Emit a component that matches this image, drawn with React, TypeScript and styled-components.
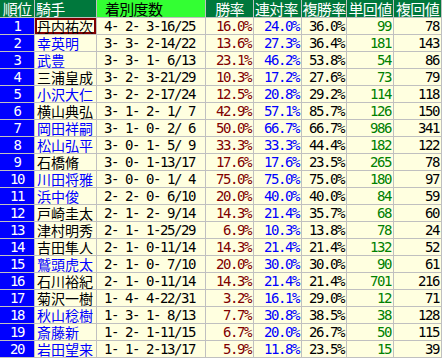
import React from 'react';
import styled, { createGlobalStyle } from 'styled-components';

const GlobalStyle = createGlobalStyle`
    html, body {
        margin: 0;
        padding: 0;
        background: #ffffff;
    }
`;

const MONO = `'DejaVu Sans Mono', 'Liberation Mono', 'Noto Sans CJK JP', monospace`;
const JP = `'Noto Sans CJK JP', 'Noto Sans', sans-serif`;

interface Row {
    name: string;
    blue: boolean;
    record: string;
    win: string;
    place2: string;
    place3: string;
    tan: string;
    fuku: string;
}

const rows: Row[] = [
    { name: '丹内祐次', blue: false, record: '4- 2- 3-16/25', win: '16.0%', place2: '24.0%', place3: '36.0%', tan: '99', fuku: '78' },
    { name: '幸英明', blue: true, record: '3- 3- 2-14/22', win: '13.6%', place2: '27.3%', place3: '36.4%', tan: '181', fuku: '143' },
    { name: '武豊', blue: true, record: '3- 3- 1- 6/13', win: '23.1%', place2: '46.2%', place3: '53.8%', tan: '54', fuku: '86' },
    { name: '三浦皇成', blue: false, record: '3- 2- 3-21/29', win: '10.3%', place2: '17.2%', place3: '27.6%', tan: '73', fuku: '79' },
    { name: '小沢大仁', blue: true, record: '3- 2- 2-17/24', win: '12.5%', place2: '20.8%', place3: '29.2%', tan: '114', fuku: '118' },
    { name: '横山典弘', blue: false, record: '3- 1- 2- 1/ 7', win: '42.9%', place2: '57.1%', place3: '85.7%', tan: '126', fuku: '150' },
    { name: '岡田祥嗣', blue: true, record: '3- 1- 0- 2/ 6', win: '50.0%', place2: '66.7%', place3: '66.7%', tan: '986', fuku: '341' },
    { name: '松山弘平', blue: true, record: '3- 0- 1- 5/ 9', win: '33.3%', place2: '33.3%', place3: '44.4%', tan: '182', fuku: '122' },
    { name: '石橋脩', blue: false, record: '3- 0- 1-13/17', win: '17.6%', place2: '17.6%', place3: '23.5%', tan: '265', fuku: '78' },
    { name: '川田将雅', blue: true, record: '3- 0- 0- 1/ 4', win: '75.0%', place2: '75.0%', place3: '75.0%', tan: '180', fuku: '97' },
    { name: '浜中俊', blue: true, record: '2- 2- 0- 6/10', win: '20.0%', place2: '40.0%', place3: '40.0%', tan: '84', fuku: '59' },
    { name: '戸崎圭太', blue: false, record: '2- 1- 2- 9/14', win: '14.3%', place2: '21.4%', place3: '35.7%', tan: '68', fuku: '60' },
    { name: '津村明秀', blue: false, record: '2- 1- 1-25/29', win: '6.9%', place2: '10.3%', place3: '13.8%', tan: '78', fuku: '24' },
    { name: '吉田隼人', blue: false, record: '2- 1- 0-11/14', win: '14.3%', place2: '21.4%', place3: '21.4%', tan: '132', fuku: '52' },
    { name: '鷲頭虎太', blue: true, record: '2- 1- 0- 7/10', win: '20.0%', place2: '30.0%', place3: '30.0%', tan: '90', fuku: '61' },
    { name: '石川裕紀', blue: false, record: '2- 1- 0-11/14', win: '14.3%', place2: '21.4%', place3: '21.4%', tan: '701', fuku: '216' },
    { name: '菊沢一樹', blue: false, record: '1- 4- 4-22/31', win: '3.2%', place2: '16.1%', place3: '29.0%', tan: '12', fuku: '71' },
    { name: '秋山稔樹', blue: true, record: '1- 3- 1- 8/13', win: '7.7%', place2: '30.8%', place3: '38.5%', tan: '38', fuku: '128' },
    { name: '斎藤新', blue: true, record: '1- 2- 1-11/15', win: '6.7%', place2: '20.0%', place3: '26.7%', tan: '50', fuku: '115' },
    { name: '岩田望来', blue: true, record: '1- 1- 2-13/17', win: '5.9%', place2: '11.8%', place3: '23.5%', tan: '15', fuku: '39' },
];

const Table = styled.div`
    display: grid;
    grid-template-columns: 34px 61px 108px 47px 47px 44px 46px 47px;
    grid-template-rows: 17px repeat(20, 16px);
    gap: 1px;
    padding: 0 1px 1px 0;
    width: 442px;
    box-sizing: border-box;
    background: #c0c0c0;
`;

const HeadCell = styled.div<{ $bright?: boolean; $align?: 'left' | 'center'; $pad?: number }>`
    display: flex;
    align-items: center;
    justify-content: ${(p) => (p.$align === 'left' ? 'flex-start' : 'center')};
    padding-left: ${(p) => p.$pad ?? 0}px;
    background: ${(p) => (p.$bright ? '#33ff33' : '#00783c')};
    color: ${(p) => (p.$bright ? '#000000' : '#ffffff')};
    font-family: ${JP};
    font-size: 15px;
    letter-spacing: -0.7px;
    line-height: 17px;
    white-space: nowrap;
`;

const RankCell = styled.div`
    display: flex;
    align-items: center;
    justify-content: center;
    background: #0000ff;
    color: #ffffff;
    font-family: ${MONO};
    font-size: 14px;
    letter-spacing: -1.4px;
    line-height: 16px;
`;

const NameCell = styled.div<{ $blue: boolean; $framed?: boolean }>`
    display: flex;
    align-items: center;
    padding-left: 2px;
    background: #ffffe0;
    color: ${(p) => (p.$blue ? '#0000ff' : '#000000')};
    font-family: ${JP};
    font-size: 14px;
    line-height: 16px;
    white-space: nowrap;
    box-shadow: ${(p) => (p.$framed ? 'inset 0 0 0 2px #800000' : 'none')};
`;

const NumCell = styled.div<{ $color?: string; $left?: boolean }>`
    display: flex;
    align-items: center;
    justify-content: ${(p) => (p.$left ? 'flex-start' : 'flex-end')};
    padding: ${(p) => (p.$left ? '0 0 0 7px' : '0 2px 0 0')};
    background: #ffffe0;
    color: ${(p) => p.$color ?? '#000000'};
    font-family: ${MONO};
    font-size: 14px;
    letter-spacing: -1.43px;
    line-height: 16px;
    white-space: pre;
`;

const App: React.FC = () => {
    return (
        <>
            <GlobalStyle />
            <Table>
                <HeadCell>順位</HeadCell>
                <HeadCell $align="left" $pad={1}>騎手</HeadCell>
                <HeadCell $bright $align="left" $pad={8}>着別度数</HeadCell>
                <HeadCell>勝率</HeadCell>
                <HeadCell $align="left" $pad={1}>連対率</HeadCell>
                <HeadCell>複勝率</HeadCell>
                <HeadCell>単回値</HeadCell>
                <HeadCell>複回値</HeadCell>
                {rows.map((r, i) => (
                    <React.Fragment key={r.name}>
                        <RankCell>{i + 1}</RankCell>
                        <NameCell $blue={r.blue} $framed={i === 0}>{r.name}</NameCell>
                        <NumCell $left>{r.record}</NumCell>
                        <NumCell $color="#800000">{r.win}</NumCell>
                        <NumCell $color="#0000ff">{r.place2}</NumCell>
                        <NumCell>{r.place3}</NumCell>
                        <NumCell $color="#008000">{r.tan}</NumCell>
                        <NumCell>{r.fuku}</NumCell>
                    </React.Fragment>
                ))}
            </Table>
        </>
    );
};

export default App;
